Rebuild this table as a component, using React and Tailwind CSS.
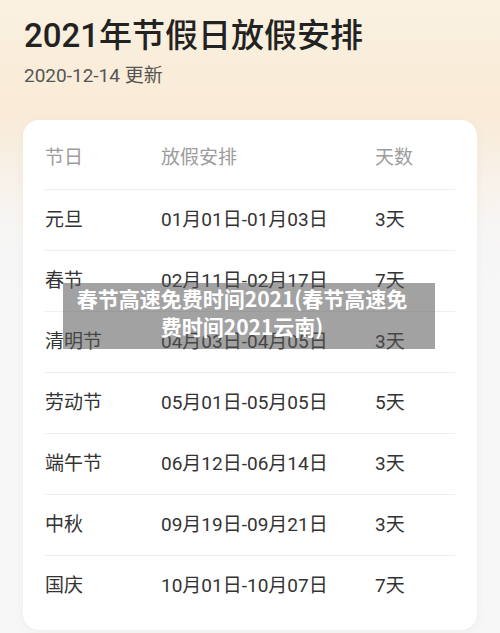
const rows = [
  { name: "元旦", range: "01月01日-01月03日", days: "3天" },
  { name: "春节", range: "02月11日-02月17日", days: "7天" },
  { name: "清明节", range: "04月03日-04月05日", days: "3天" },
  { name: "劳动节", range: "05月01日-05月05日", days: "5天" },
  { name: "端午节", range: "06月12日-06月14日", days: "3天" },
  { name: "中秋", range: "09月19日-09月21日", days: "3天" },
  { name: "国庆", range: "10月01日-10月07日", days: "7天" },
];

const App = () => {
  return (
    <div className="relative w-[500px] h-[633px] overflow-hidden bg-[linear-gradient(180deg,#faf1e1_0px,#f9ebd6_110px,#f8f1e8_175px,#f7f6f5_230px,#f7f7f8_300px)] font-['Roboto','Noto_Sans_CJK_SC',sans-serif]">
      <div className="px-[24px] pt-[14px]">
        <h1 className="text-[33px] leading-[44px] font-medium text-[#222222]">
          2021年节假日放假安排
        </h1>
        <p className="mt-[6px] text-[19px] leading-[24px] text-[#555555]">
          2020-12-14 更新
        </p>
      </div>

      <div className="mx-[23px] mt-[32px] bg-white rounded-[16px] shadow-[0_2px_10px_rgba(200,170,130,0.12)] px-[22px] pt-[8px] pb-[14px]">
        <div className="grid grid-cols-[116px_214px_1fr] items-center h-[61px] text-[19px] text-[#9c9c9c]">
          <span>节日</span>
          <span>放假安排</span>
          <span>天数</span>
        </div>
        {rows.map((row) => (
          <div
            key={row.name}
            className="grid grid-cols-[116px_214px_1fr] items-center h-[61px] border-t border-[#efefef] text-[19px] text-[#333333]"
          >
            <span>{row.name}</span>
            <span>{row.range}</span>
            <span>{row.days}</span>
          </div>
        ))}
      </div>

      <div className="absolute left-[63px] top-[283px] w-[372px] h-[66px] bg-[rgba(85,85,85,0.55)] pt-[1px] pr-[14px] text-center text-white font-bold text-[21px] leading-[28px] font-['Noto_Sans_CJK_SC',sans-serif]">
        春节高速免费时间2021(春节高速免
        <br />
        费时间2021云南)
      </div>
    </div>
  );
};

export default App;
